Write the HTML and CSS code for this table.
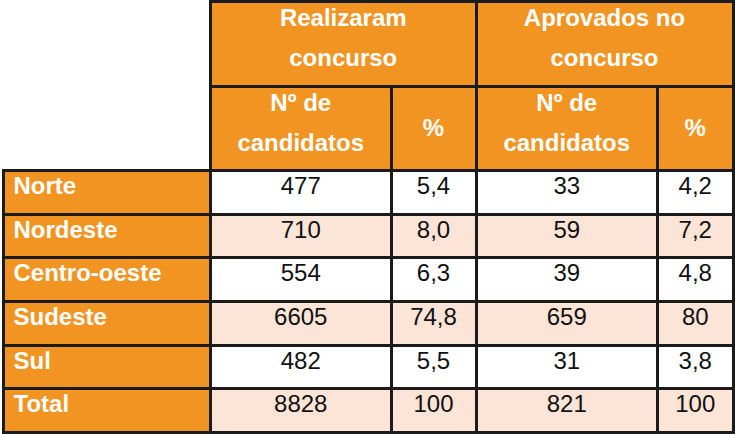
FILE: index.html
```html
<!DOCTYPE html>
<html lang="pt">
<head>
<meta charset="utf-8">
<title>Concurso por região</title>
<link rel="stylesheet" href="styles.css">
</head>
<body>
<table class="stats">
  <colgroup>
    <col class="c-label">
    <col class="c-num">
    <col class="c-pct">
    <col class="c-num2">
    <col class="c-pct2">
  </colgroup>
  <thead>
    <tr class="h1">
      <th class="blank" rowspan="2"></th>
      <th class="head" colspan="2"><div class="lines">Realizaram<br>concurso</div></th>
      <th class="head" colspan="2"><div class="lines">Aprovados no<br>concurso</div></th>
    </tr>
    <tr class="h2">
      <th class="head"><div class="lines">Nº de<br>candidatos</div></th>
      <th class="head mid">%</th>
      <th class="head"><div class="lines">Nº de<br>candidatos</div></th>
      <th class="head mid">%</th>
    </tr>
  </thead>
  <tbody>
    <tr><th class="label">Norte</th><td>477</td><td>5,4</td><td>33</td><td>4,2</td></tr>
    <tr class="alt"><th class="label">Nordeste</th><td>710</td><td>8,0</td><td>59</td><td>7,2</td></tr>
    <tr><th class="label">Centro-oeste</th><td>554</td><td>6,3</td><td>39</td><td>4,8</td></tr>
    <tr class="alt"><th class="label">Sudeste</th><td>6605</td><td>74,8</td><td>659</td><td>80</td></tr>
    <tr><th class="label">Sul</th><td>482</td><td>5,5</td><td>31</td><td>3,8</td></tr>
    <tr class="alt"><th class="label">Total</th><td>8828</td><td>100</td><td>821</td><td>100</td></tr>
  </tbody>
</table>
</body>
</html>
```
FILE: styles.css
```css
html, body {
  margin: 0;
  padding: 0;
  background: #ffffff;
}

.stats {
  border-collapse: collapse;
  table-layout: fixed;
  margin-left: 1.5px;
  font-family: "Liberation Sans", Arial, sans-serif;
  font-size: 24px;
}

.c-label { width: 207.5px; }
.c-num { width: 180.5px; }
.c-pct { width: 85px; }
.c-num2 { width: 181.5px; }
.c-pct2 { width: 75.5px; }

.stats th,
.stats td {
  border: 3px solid #1b1b1b;
  padding: 0;
}

.stats .blank {
  border: none;
  background: #ffffff;
}

.head {
  background: #f29422;
  color: #ffffff;
  font-weight: bold;
  text-align: center;
  vertical-align: top;
  height: 81.5px;
}

.lines {
  line-height: 40px;
  margin-top: -5px;
}

.head.mid {
  vertical-align: middle;
  line-height: 26px;
}

.label {
  background: #f29422;
  color: #ffffff;
  font-weight: bold;
  text-align: left;
  padding-left: 9px !important;
}

.stats tbody th,
.stats tbody td {
  height: 39.67px;
  line-height: 26px;
  vertical-align: top;
  padding-top: 1px;
}

.stats tbody td {
  background: #ffffff;
  color: #111111;
  text-align: center;
}

.stats tbody tr.alt td {
  background: #fce4d6;
}
```
